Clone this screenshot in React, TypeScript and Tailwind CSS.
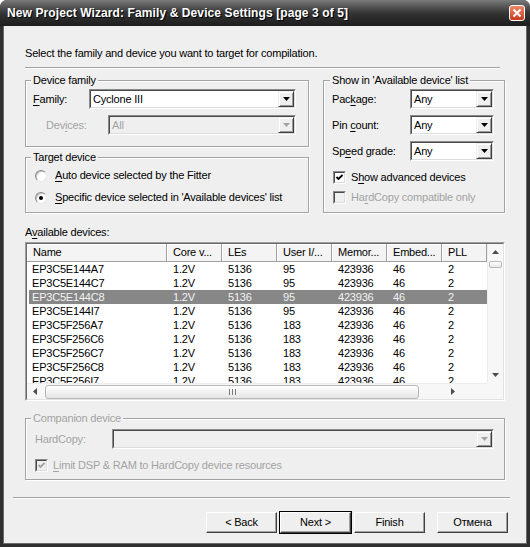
import React from 'react';

type Dir = 'up' | 'down' | 'left' | 'right';

const rows = [
  ['EP3C5E144A7', '1.2V', '5136', '95', '423936', '46', '2'],
  ['EP3C5E144C7', '1.2V', '5136', '95', '423936', '46', '2'],
  ['EP3C5E144C8', '1.2V', '5136', '95', '423936', '46', '2'],
  ['EP3C5E144I7', '1.2V', '5136', '95', '423936', '46', '2'],
  ['EP3C5F256A7', '1.2V', '5136', '183', '423936', '46', '2'],
  ['EP3C5F256C6', '1.2V', '5136', '183', '423936', '46', '2'],
  ['EP3C5F256C7', '1.2V', '5136', '183', '423936', '46', '2'],
  ['EP3C5F256C8', '1.2V', '5136', '183', '423936', '46', '2'],
  ['EP3C5F256I7', '1.2V', '5136', '183', '423936', '46', '2'],
];

const columns = ['Name', 'Core v...', 'LEs', 'User I/...', 'Memor...', 'Embed...', 'PLL'];
const colWidths = ['w-[140px]', 'w-[55px]', 'w-[55px]', 'w-[55px]', 'w-[55px]', 'w-[55px]', 'w-[45px]'];

function Tri({ dir, color = '#000' }: { dir: Dir; color?: string }) {
  const pts = {
    down: '0,0 7,0 3.5,4',
    up: '0,4 7,4 3.5,0',
    left: '4,0 4,7 0,3.5',
    right: '0,0 0,7 4,3.5',
  }[dir];
  const vertical = dir === 'up' || dir === 'down';
  return (
    <svg width={vertical ? 7 : 4} height={vertical ? 4 : 7} viewBox={vertical ? '0 0 7 4' : '0 0 4 7'}>
      <polygon points={pts} fill={color} />
    </svg>
  );
}

// accelerator letter
function U({ children }: { children: React.ReactNode }) {
  return <span className="underline underline-offset-[2px]">{children}</span>;
}

function Combo({ value, width, disabled }: { value?: string; width: string; disabled?: boolean }) {
  return (
    <div className={`h-[20px] ${width} border border-t-[#8a8a8a] border-l-[#8a8a8a] border-b-white border-r-white`}>
      <div
        className={`h-full flex items-center border border-t-[#4a4a4a] border-l-[#4a4a4a] border-b-[#dcdcdc] border-r-[#dcdcdc] ${
          disabled ? 'bg-[#efefef] text-[#a3a3a3]' : 'bg-white text-black'
        }`}
      >
        <span className="flex-1 pl-[2px] truncate">{value}</span>
        <div className="w-[16px] h-[16px] flex items-center justify-center bg-[#efefef] border border-t-[#efefef] border-l-[#efefef] border-b-[#404040] border-r-[#404040] shadow-[inset_1px_1px_0_#fff,inset_-1px_-1px_0_#9a9a9a]">
          <Tri dir="down" color={disabled ? '#a3a3a3' : '#000'} />
        </div>
      </div>
    </div>
  );
}

function Check({ checked, disabled }: { checked?: boolean; disabled?: boolean }) {
  return (
    <div className="w-[13px] h-[13px] shrink-0 border border-t-[#8a8a8a] border-l-[#8a8a8a] border-b-white border-r-white">
      <div
        className={`w-full h-full flex items-center justify-center border border-t-[#4a4a4a] border-l-[#4a4a4a] border-b-[#dcdcdc] border-r-[#dcdcdc] ${
          disabled ? 'bg-[#efefef]' : 'bg-white'
        }`}
      >
        {checked && (
          <svg width="9" height="9" viewBox="0 0 9 9">
            <polyline points="1.5,4 3.5,6 7.5,2" fill="none" stroke={disabled ? '#a3a3a3' : '#000'} strokeWidth="1.8" />
          </svg>
        )}
      </div>
    </div>
  );
}

function Radio({ checked }: { checked?: boolean }) {
  return (
    <div className="w-[12px] h-[12px] shrink-0 rounded-full bg-white border border-t-[#8a8a8a] border-l-[#8a8a8a] border-b-[#e8e8e8] border-r-[#e8e8e8] shadow-[inset_1px_1px_0_#c0c0c0] flex items-center justify-center">
      {checked && <div className="w-[4px] h-[4px] rounded-full bg-black" />}
    </div>
  );
}

function Button({ label, isDefault }: { label: string; isDefault?: boolean }) {
  return (
    <div
      className={`w-[73px] h-[23px] ${
        isDefault ? 'border border-black' : 'border border-transparent'
      } flex`}
    >
      <div className="flex-1 flex items-center justify-center bg-[#efefef] border border-t-white border-l-white border-b-[#404040] border-r-[#404040] shadow-[inset_-1px_-1px_0_#a0a0a0]">
        {label}
      </div>
    </div>
  );
}

const groupCls =
  'border border-[#a3a3a3] shadow-[inset_1px_1px_0_#fff,1px_1px_0_#fff] min-w-0';
const legendCls = '-ml-[2px] px-[2px] leading-[13px] bg-[#efefef]';

export default function App() {
  return (
    <div className="w-[530px] h-[547px] flex flex-col bg-[#2f2f2f] rounded-t-[7px] overflow-hidden text-[11px] leading-[13px] tracking-[-0.2px] text-black font-['Liberation_Sans',Arial,sans-serif]">
      {/* Title bar */}
      <div className="h-[26px] shrink-0 flex items-center justify-between pl-[7px] pr-[5px] bg-gradient-to-b from-[#7a7a7a] via-[#353535] to-[#1d1d1d]">
        <span className="text-white font-bold text-[12px] tracking-[0.1px] [text-shadow:1px_1px_0_#000]">
          New Project Wizard: Family &amp; Device Settings [page 3 of 5]
        </span>
        <div className="w-[16px] h-[16px] rounded-[3px] border border-white bg-gradient-to-b from-[#f0866a] to-[#c9391b] flex items-center justify-center">
          <svg width="10" height="10" viewBox="0 0 10 10">
            <path d="M1.5 1.5 L8.5 8.5 M8.5 1.5 L1.5 8.5" stroke="#fff" strokeWidth="2" />
          </svg>
        </div>
      </div>

      {/* Body */}
      <div className="flex-1 mx-[3px] mb-[3px] bg-[#efefef] flex flex-col pt-[21px] shadow-[inset_1px_0_0_#6a6a6a,inset_-1px_0_0_#6a6a6a,inset_0_-1px_0_#6a6a6a]">
        <div className="pl-[22px]">Select the family and device you want to target for compilation.</div>
        <div className="ml-[22px] mt-[7px] w-[475px] h-[2px] border-t border-t-[#a3a3a3] border-b border-b-white" />

        <div className="flex pl-[22px] mt-[5px] gap-[14px]">
          {/* left column */}
          <div className="w-[284px] flex flex-col gap-[4px]">
            <fieldset className={`${groupCls} h-[73px] px-[7px] pt-[2px]`}>
              <legend className={legendCls}>Device family</legend>
              <div className="flex items-center">
                <span className="w-[56px]">
                  <U>F</U>amily:
                </span>
                <Combo value="Cyclone III" width="w-[207px]" />
              </div>
              <div className="flex items-center mt-[6px] text-[#a3a3a3]">
                <span className="ml-[13px] w-[62px]">
                  Dev<U>i</U>ces:
                </span>
                <Combo value="All" width="w-[188px]" disabled />
              </div>
            </fieldset>

            <fieldset className={`${groupCls} h-[62px] px-[7px] pt-[5px]`}>
              <legend className={legendCls}>Target device</legend>
              <div className="flex items-center h-[13px] pl-[2px] gap-[8px]">
                <Radio />
                <span>
                  <U>A</U>uto device selected by the Fitter
                </span>
              </div>
              <div className="flex items-center h-[13px] pl-[2px] gap-[8px] mt-[9px]">
                <Radio checked />
                <span>
                  <U>S</U>pecific device selected in 'Available devices' list
                </span>
              </div>
            </fieldset>
          </div>

          {/* right column */}
          <fieldset className={`${groupCls} w-[182px] h-[139px] px-[8px] pt-[2px]`}>
            <legend className={legendCls}>Show in 'Available device' list</legend>
            <div className="flex items-center">
              <span className="w-[78px]">
                Pac<U>k</U>age:
              </span>
              <Combo value="Any" width="w-[84px]" />
            </div>
            <div className="flex items-center mt-[6px]">
              <span className="w-[78px]">
                Pin <U>c</U>ount:
              </span>
              <Combo value="Any" width="w-[84px]" />
            </div>
            <div className="flex items-center mt-[6px]">
              <span className="w-[78px]">
                Sp<U>e</U>ed grade:
              </span>
              <Combo value="Any" width="w-[84px]" />
            </div>
            <div className="flex items-center h-[13px] mt-[10px] pl-[1px] gap-[5px]">
              <Check checked />
              <span>
                S<U>h</U>ow advanced devices
              </span>
            </div>
            <div className="flex items-center h-[13px] mt-[7px] pl-[1px] gap-[5px] text-[#a3a3a3]">
              <Check disabled />
              <span>
                Ha<U>r</U>dCopy compatible only
              </span>
            </div>
          </fieldset>
        </div>

        {/* Available devices */}
        <div className="pl-[22px] mt-[13px]">
          A<U>v</U>ailable devices:
        </div>
        <div className="ml-[22px] mt-[3px] w-[480px] h-[159px] border border-t-[#a0a0a0] border-l-[#a0a0a0] border-b-white border-r-white">
          <div className="w-full h-full flex flex-col bg-white border border-t-[#696969] border-l-[#696969] border-b-[#e3e3e3] border-r-[#e3e3e3]">
            <div className="flex flex-1 min-h-0">
              <div className="w-[460px] flex flex-col overflow-hidden">
                <div className="flex h-[18px] shrink-0">
                  {columns.map((c, i) => (
                    <div
                      key={c}
                      className={`${colWidths[i]} shrink-0 flex items-center px-[6px] bg-[#f4f4f4] border-r border-r-[#a0a0a0] border-b border-b-[#a0a0a0] shadow-[inset_1px_1px_0_#fff]`}
                    >
                      {c}
                    </div>
                  ))}
                </div>
                <div className="flex-1 overflow-hidden">
                  {rows.map((r, ri) => (
                    <div
                      key={r[0]}
                      className={`flex h-[14px] items-center ml-[2px] ${
                        ri === 2 ? 'bg-[#878787] text-[#f2f2f2]' : ''
                      }`}
                    >
                      {r.map((v, ci) => (
                        <div
                          key={ci}
                          className={`${ci === 0 ? 'w-[138px] pl-[3px]' : `${colWidths[ci]} pl-[6px]`} shrink-0 whitespace-nowrap overflow-hidden`}
                        >
                          {v}
                        </div>
                      ))}
                    </div>
                  ))}
                </div>
              </div>
              {/* vertical scrollbar */}
              <div className="w-[16px] flex flex-col bg-[#f7f7f7] border-l border-l-[#ececec]">
                <div className="h-[16px] flex items-center justify-center">
                  <Tri dir="up" color="#4d4d4d" />
                </div>
                <div className="mx-[1px] mt-[1px] h-[7px] rounded-[2px] border border-[#b8b8b8] bg-gradient-to-b from-white to-[#e6e6e6]" />
                <div className="flex-1" />
                <div className="h-[16px] flex items-center justify-center">
                  <Tri dir="down" color="#4d4d4d" />
                </div>
              </div>
            </div>
            {/* horizontal scrollbar */}
            <div className="flex h-[16px] shrink-0">
              <div className="w-[460px] flex items-center bg-[#f7f7f7] border-t border-t-[#ececec]">
                <div className="w-[16px] flex items-center justify-center">
                  <Tri dir="left" color="#4d4d4d" />
                </div>
                <div className="ml-[2px] w-[374px] h-[14px] rounded-[3px] border border-[#b8b8b8] bg-gradient-to-b from-white to-[#e4e4e4] flex items-center justify-center gap-[2px]">
                  <div className="w-[1px] h-[6px] bg-[#7a7a7a]" />
                  <div className="w-[1px] h-[6px] bg-[#7a7a7a]" />
                  <div className="w-[1px] h-[6px] bg-[#7a7a7a]" />
                </div>
                <div className="flex-1 flex items-center justify-center">
                  <Tri dir="right" color="#4d4d4d" />
                </div>
              </div>
              <div className="w-[16px] bg-[#f7f7f7]" />
            </div>
          </div>
        </div>

        {/* Companion device */}
        <div className="pl-[22px] mt-[11px]">
          <fieldset className={`${groupCls} w-[480px] h-[68px] px-[7px] pt-[4px] text-[#a3a3a3]`}>
            <legend className={legendCls}>Companion device</legend>
            <div className="flex items-center">
              <span className="ml-[2px] w-[77px]">HardCopy:</span>
              <Combo width="w-[382px]" disabled />
            </div>
            <div className="flex items-center h-[13px] mt-[10px] pl-[2px] gap-[5px]">
              <Check checked disabled />
              <span>
                <U>L</U>imit DSP &amp; RAM to HardCopy device resources
              </span>
            </div>
          </fieldset>
        </div>

        <div className="ml-[10px] mt-[17px] w-[497px] h-[2px] border-t border-t-[#a3a3a3] border-b border-b-white" />

        <div className="flex pl-[202px] mt-[12px]">
          <Button label="< Back" />
          <div className="ml-[1px]">
            <Button label="Next >" isDefault />
          </div>
          <div className="ml-[1px]">
            <Button label="Finish" />
          </div>
          <div className="ml-[10px]">
            <Button label="Отмена" />
          </div>
        </div>
      </div>
    </div>
  );
}
